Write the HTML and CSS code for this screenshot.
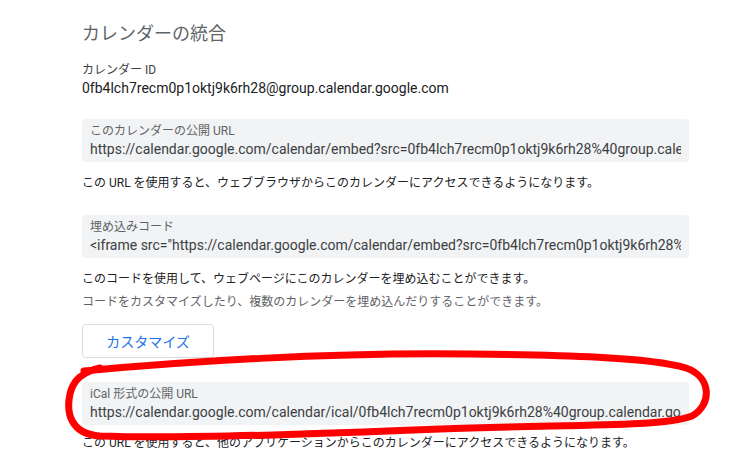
FILE: index.html
```html
<!DOCTYPE html>
<html lang="ja">
<head>
<meta charset="utf-8">
<title>カレンダーの統合</title>
<link rel="stylesheet" href="styles.css">
</head>
<body>
<main class="page">
  <h1 class="title">カレンダーの統合</h1>

  <section class="field">
    <div class="field-label">カレンダー ID</div>
    <div class="field-value">0fb4lch7recm0p1oktj9k6rh28@group.calendar.google.com</div>
  </section>

  <section class="box box-first">
    <div class="box-label">このカレンダーの公開 URL</div>
    <div class="box-value">https://calendar.google.com/calendar/embed?src=0fb4lch7recm0p1oktj9k6rh28%40group.calendar.google.com&amp;ctz=Asia%2FTokyo</div>
  </section>
  <p class="desc">この URL を使用すると、ウェブブラウザからこのカレンダーにアクセスできるようになります。</p>

  <section class="box box-next">
    <div class="box-label">埋め込みコード</div>
    <div class="box-value">&lt;iframe src="https://calendar.google.com/calendar/embed?src=0fb4lch7recm0p1oktj9k6rh28%40group.calendar.google.com" style="border: 0"&gt;</div>
  </section>
  <p class="desc">このコードを使用して、ウェブページにこのカレンダーを埋め込むことができます。</p>
  <p class="desc desc-muted">コードをカスタマイズしたり、複数のカレンダーを埋め込んだりすることができます。</p>

  <button class="btn" type="button">カスタマイズ</button>

  <section class="box box-next">
    <div class="box-label">iCal 形式の公開 URL</div>
    <div class="box-value">https://calendar.google.com/calendar/ical/0fb4lch7recm0p1oktj9k6rh28%40group.calendar.google.com/public/basic.ics</div>
  </section>
  <p class="desc desc-last">この URL を使用すると、他のアプリケーションからこのカレンダーにアクセスできるようになります。</p>
</main>

<svg class="annotation" width="738" height="466" viewBox="0 0 738 466" aria-hidden="true">
  <path d="M 84 371 C 180 362, 330 352, 470 354 C 560 355, 650 357, 686 368 C 712 377, 712 405, 692 416 C 660 428, 560 424, 440 429 C 320 434, 180 439, 100 436 C 70 434, 66 412, 70 394 C 73 380, 82 372, 100 368"
        fill="none" stroke="#ff0000" stroke-width="7" stroke-linecap="round" stroke-linejoin="round"/>
</svg>
</body>
</html>
```

FILE: styles.css
```css
html, body {
  margin: 0;
  padding: 0;
  background: #ffffff;
}

body {
  font-family: Roboto, "Noto Sans CJK JP", "Noto Sans", sans-serif;
  color: #202124;
  position: relative;
  width: 738px;
  height: 466px;
  overflow: hidden;
}

.page {
  display: flex;
  flex-direction: column;
  align-items: flex-start;
  padding: 22px 0 0 82px;
  width: 607px;
}

.title {
  margin: 0;
  font-size: 18px;
  line-height: 24px;
  font-weight: 400;
  color: #5f6368;
}

.field {
  margin-top: 16px;
  display: flex;
  flex-direction: column;
}

.field-label {
  font-size: 12px;
  line-height: 16px;
  color: #3c4043;
}

.field-value {
  font-size: 14px;
  line-height: 20px;
  color: #202124;
}

.box {
  box-sizing: border-box;
  width: 607px;
  background: #f1f3f4;
  border-radius: 4px;
  padding: 4px 8px 3px;
  display: flex;
  flex-direction: column;
}

.box-first {
  margin-top: 21px;
}

.box-next {
  margin-top: 24px;
}

.box-label {
  font-size: 12px;
  line-height: 16px;
  color: #5f6368;
}

.box-value {
  font-size: 14px;
  line-height: 20px;
  color: #3c4043;
  white-space: nowrap;
  overflow: hidden;
  text-overflow: clip;
}

.desc {
  margin: 13px 0 0;
  font-size: 12px;
  line-height: 16px;
  color: #202124;
}

.desc-muted {
  margin-top: 7px;
  color: #5f6368;
}

.desc-last {
  margin-top: 10px;
}

.btn {
  margin-top: 14px;
  width: 132px;
  height: 34px;
  background: #ffffff;
  border: 1px solid #dadce0;
  border-radius: 4px;
  font-family: Roboto, "Noto Sans CJK JP", sans-serif;
  font-size: 14px;
  color: #1a73e8;
  padding: 0;
}

.annotation {
  position: absolute;
  left: 0;
  top: 0;
  pointer-events: none;
}
```
